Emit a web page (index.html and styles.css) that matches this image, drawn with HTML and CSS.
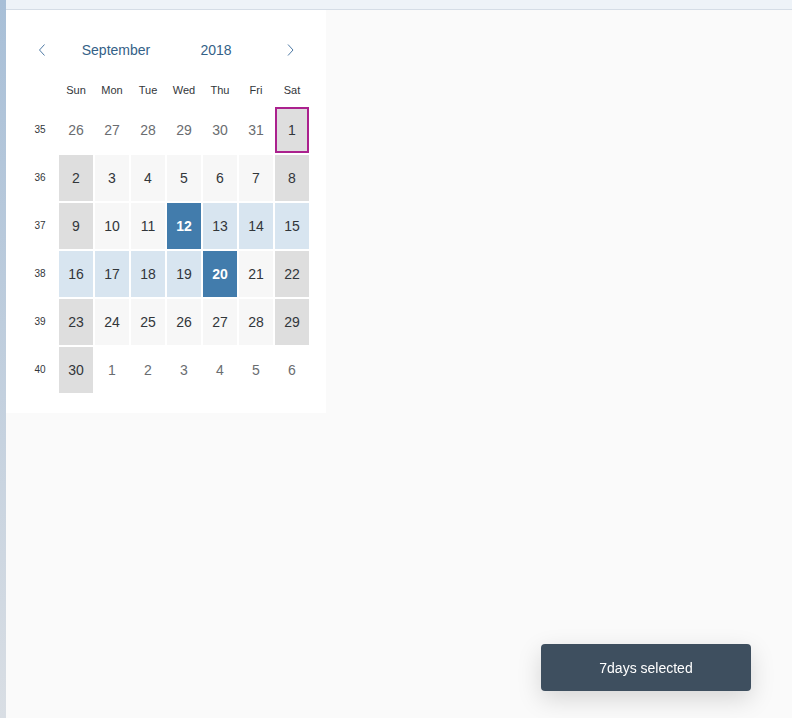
FILE: index.html
```html
<!doctype html>
<html lang="en">
<head>
    <meta charset="UTF-8">
    <meta name="viewport" content="width=device-width, initial-scale=1.0">
    <title>Calendar</title>
    <link rel="stylesheet" href="styles.css">
</head>
<body>
<div class="shell">
    <div class="strip"></div>
    <div class="main">
        <div class="topbar"></div>
        <div class="calendar">
            <div class="head">
                <a class="arrow">
                    <svg width="10" height="14" viewBox="0 0 10 14"><path d="M8.5 1.5 L3.5 7 L8.5 12.5" fill="none" stroke="#4f7aa5" stroke-width="1"/></svg>
                </a>
                <a class="month">September</a>
                <a class="year">2018</a>
                <a class="arrow">
                    <svg width="10" height="14" viewBox="0 0 10 14"><path d="M2 1.5 L7 7 L2 12.5" fill="none" stroke="#4f7aa5" stroke-width="1"/></svg>
                </a>
            </div>
            <div class="grid">
                <div class="wd"></div>
                <div class="wd">Sun</div>
                <div class="wd">Mon</div>
                <div class="wd">Tue</div>
                <div class="wd">Wed</div>
                <div class="wd">Thu</div>
                <div class="wd">Fri</div>
                <div class="wd">Sat</div>

                <div class="wk">35</div>
                <div class="day other">26</div>
                <div class="day other">27</div>
                <div class="day other">28</div>
                <div class="day other">29</div>
                <div class="day other">30</div>
                <div class="day other">31</div>
                <div class="day weekend today">1</div>

                <div class="wk">36</div>
                <div class="day weekend">2</div>
                <div class="day">3</div>
                <div class="day">4</div>
                <div class="day">5</div>
                <div class="day">6</div>
                <div class="day">7</div>
                <div class="day weekend">8</div>

                <div class="wk">37</div>
                <div class="day weekend">9</div>
                <div class="day">10</div>
                <div class="day">11</div>
                <div class="day selected">12</div>
                <div class="day range">13</div>
                <div class="day range">14</div>
                <div class="day range">15</div>

                <div class="wk">38</div>
                <div class="day range">16</div>
                <div class="day range">17</div>
                <div class="day range">18</div>
                <div class="day range">19</div>
                <div class="day selected">20</div>
                <div class="day">21</div>
                <div class="day weekend">22</div>

                <div class="wk">39</div>
                <div class="day weekend">23</div>
                <div class="day">24</div>
                <div class="day">25</div>
                <div class="day">26</div>
                <div class="day">27</div>
                <div class="day">28</div>
                <div class="day weekend">29</div>

                <div class="wk">40</div>
                <div class="day weekend">30</div>
                <div class="day other">1</div>
                <div class="day other">2</div>
                <div class="day other">3</div>
                <div class="day other">4</div>
                <div class="day other">5</div>
                <div class="day other">6</div>
            </div>
        </div>
    </div>
</div>
<div class="toast">7days selected</div>
</body>
</html>
```

FILE: styles.css
```css
html, body {
    width: 100%;
    height: 100%;
    margin: 0;
    padding: 0;
    overflow: hidden;
}

body {
    background: #fafafa;
    font-family: "Liberation Sans", Arial, sans-serif;
    color: #32363a;
}

.shell {
    display: flex;
    height: 100%;
}

.strip {
    width: 6px;
    flex-shrink: 0;
    background: linear-gradient(to bottom, #a8bfd7, #d9dee4);
}

.main {
    flex: 1;
}

.topbar {
    height: 9px;
    background: #eef3f8;
    border-bottom: 1px solid #d5dde6;
}

.calendar {
    width: 286px;
    background: #fff;
    padding: 25px 17px 20px 17px;
}

.head {
    display: flex;
    align-items: center;
    height: 30px;
    margin-bottom: 9px;
}

.head a {
    display: flex;
    align-items: center;
    justify-content: center;
    height: 30px;
    color: #346187;
    font-size: 14px;
}

.arrow {
    width: 36px;
}

.month {
    width: 114px;
}

.year {
    width: 86px;
    margin-right: 14px;
}

.grid {
    display: grid;
    grid-template-columns: repeat(8, 34px);
    grid-template-rows: 31px repeat(6, 46px);
    gap: 2px;
}

.wd {
    display: flex;
    align-items: center;
    justify-content: center;
    font-size: 11px;
}

.wk {
    display: flex;
    align-items: center;
    justify-content: center;
    font-size: 10px;
    padding-bottom: 1px;
}

.day {
    display: flex;
    align-items: center;
    justify-content: center;
    font-size: 14px;
    background: #f7f7f7;
    box-sizing: border-box;
}

.day.other {
    background: #fff;
    color: #6a6d70;
}

.day.weekend {
    background: #dedede;
}

.day.range {
    background: #d8e5f0;
}

.day.selected {
    background: #427cac;
    color: #fff;
    font-weight: bold;
}

.day.today {
    border: 2px solid #ab218e;
}

.toast {
    position: fixed;
    left: 541px;
    top: 644px;
    width: 210px;
    height: 47px;
    display: flex;
    align-items: center;
    justify-content: center;
    background: #3e4f5f;
    color: #fff;
    font-size: 14px;
    border-radius: 4px;
    box-shadow: 0 8px 24px rgba(0, 0, 0, 0.15);
}
```
